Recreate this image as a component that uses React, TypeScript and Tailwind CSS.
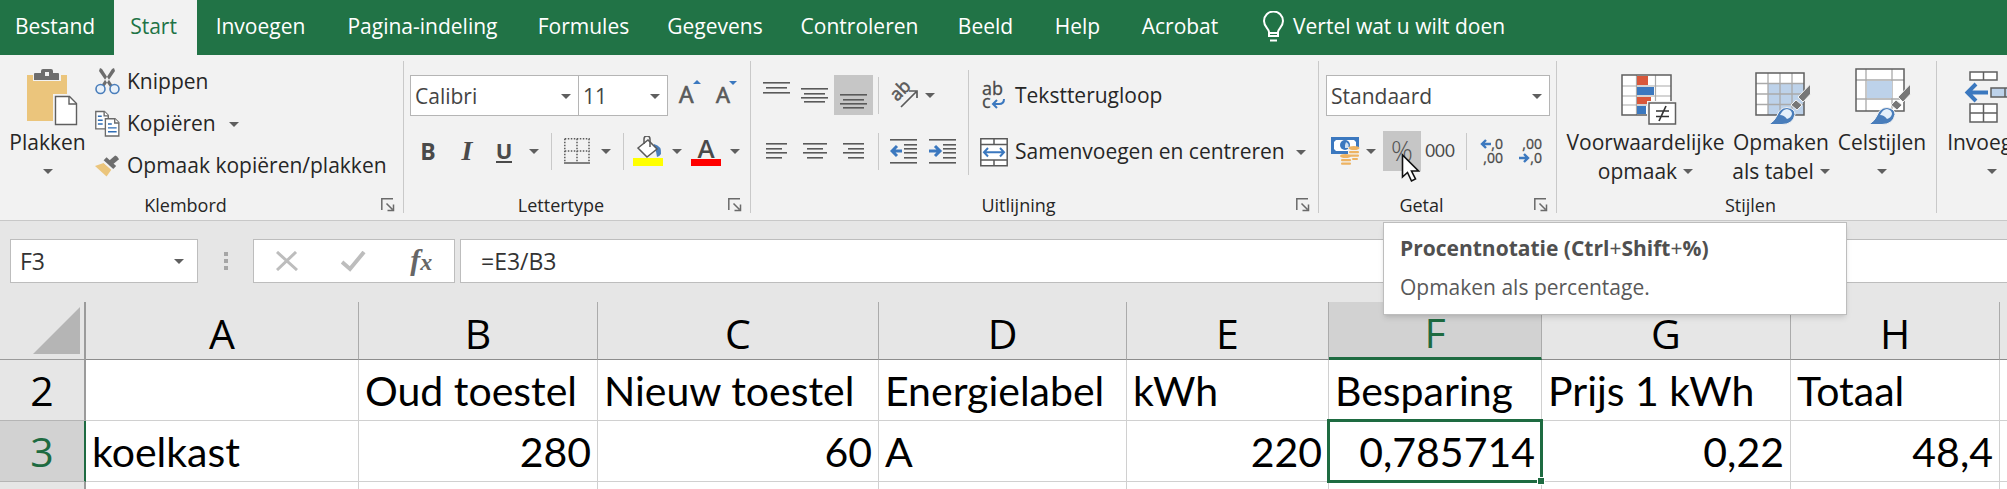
import type { ReactNode } from "react";
import clsx from "clsx";

const tabs = [
  { label: "Bestand", width: "w-[114px]" },
  { label: "Start", width: "w-[83px]", active: true },
  { label: "Invoegen", width: "w-[131px]" },
  { label: "Pagina-indeling", width: "w-[193px]" },
  { label: "Formules", width: "w-[129px]" },
  { label: "Gegevens", width: "w-[134px]" },
  { label: "Controleren", width: "w-[155px]" },
  { label: "Beeld", width: "w-[97px]" },
  { label: "Help", width: "w-[87px]" },
  { label: "Acrobat", width: "w-[118px]" },
];

const columns = [
  { name: "A", width: "w-[273px]" },
  { name: "B", width: "w-[239px]" },
  { name: "C", width: "w-[281px]" },
  { name: "D", width: "w-[248px]" },
  { name: "E", width: "w-[202px]" },
  { name: "F", width: "w-[213px]" },
  { name: "G", width: "w-[249px]" },
  { name: "H", width: "w-[209px]" },
];

const rows = [
  { nr: 2, cells: ["", "Oud toestel", "Nieuw toestel", "Energielabel", "kWh", "Besparing", "Prijs 1 kWh", "Totaal"] },
  { nr: 3, cells: ["koelkast", "280", "60", "A", "220", "0,785714", "0,22", "48,4"] },
  { nr: 4, cells: ["", "", "", "", "", "", "", ""] },
];

const selected = { col: "F", row: 3 };

const isNumber = (value: string) => /^[\d,]+$/.test(value);

const Caret = ({ className }: { className?: string }) => (
  <svg width="10" height="5" viewBox="0 0 10 5" className={clsx("shrink-0", className)}>
    <path d="M0 0h10L5 5z" fill="#5f5f5f" />
  </svg>
);

const Divider = ({ className }: { className?: string }) => (
  <div className={clsx("w-px shrink-0 bg-[#c9c9c9]", className)} />
);

// Horizontal text lines, given as [x, y, width]
const Lines = ({ lines, children }: { lines: number[][]; children?: ReactNode }) => (
  <svg width="28" height="28" viewBox="0 0 28 28" className="shrink-0">
    {lines.map(([x, y, w]) => (
      <rect key={y} x={x} y={y} width={w} height="1.6" fill="#5a5a5a" />
    ))}
    {children}
  </svg>
);

const BulbIcon = () => (
  <svg width="24" height="32" viewBox="0 0 24 32" fill="none" stroke="#fff" strokeWidth="2">
    <path d="M8 25v-4c0-3-5-5-5-11a9 9 0 0 1 19 0c0 6-5 8-5 11v4z" />
    <path d="M8 22h9M9 29.500h7" />
  </svg>
);

const PasteIcon = () => (
  <svg width="62" height="60" viewBox="-8 0 62 60">
    <rect x="2" y="7" width="40" height="46" fill="#ebc57c" />
    <path d="M8 5h28v8H8z" fill="#f2f2f2" />
    <path d="M9 12V6q0-1 1-1h6V3q0-2 2-2h8q2 0 2 2v2h5q1 0 1 1v6z" fill="#6d6d6d" />
    <rect x="20" y="4" width="4" height="4" fill="#f2f2f2" />
    <path d="M28 26h16l10 10v24H28z" fill="#f2f2f2" />
    <path d="M30.500 28.500h14l7 7v21h-21z" fill="#fff" stroke="#5f5f5f" strokeWidth="1.400" />
    <path d="M44 28.500v7.500h7.500" fill="none" stroke="#5f5f5f" strokeWidth="1.400" />
  </svg>
);

const CutIcon = () => (
  <svg width="25" height="28" viewBox="0 0 25 28">
    <path d="M5 0l2 1 11 17-3 1L4 3zM19 0l-2 1L6 18l3 1L20 3z" fill="#6d6d6d" />
    <circle cx="5.500" cy="21" r="4.500" fill="#e9f1f9" stroke="#4a7ebb" strokeWidth="1.600" />
    <circle cx="19.500" cy="21" r="4.500" fill="#e9f1f9" stroke="#4a7ebb" strokeWidth="1.600" />
  </svg>
);

const CopyIcon = () => (
  <svg width="25" height="28" viewBox="0 0 26 28">
    <g stroke="#6a6a6a" strokeWidth="1.400" fill="#fff">
      <path d="M.8 1h9l4 4v14H.8z" />
      <path d="M9.500 1v4.500H14" />
      <path d="M10.800 8.500h10l4 4v14h-14z" />
      <path d="M20.500 8.500V13H25" />
    </g>
    <path d="M3 6h4M3 10h5M3 14h5M13.500 14h4M13.500 18h9M13.500 22h9" stroke="#2f6db5" strokeWidth="1.500" />
  </svg>
);

const PainterIcon = () => (
  <svg width="25" height="24" viewBox="0 0 26 24">
    <path d="M0 12l9-3 8 7-5 7z" fill="#ebc57c" />
    <path d="M9 6l3-3 10 9-3 3z" fill="#6d6d6d" />
    <path d="M14 7l7-6 2 1 2 3-6 5z" fill="#6d6d6d" />
    <path d="M9 8l9 8" stroke="#f2f2f2" strokeWidth="1.200" />
  </svg>
);

const BordersIcon = () => (
  <svg width="26" height="26" viewBox="0 0 26 26" stroke="#5a5a5a" strokeWidth="1.500">
    <path d="M.8 .8h25M.8 13h25M.8 .8v23M13 .8v23M25 .8v23" strokeDasharray="1.500 1.500" fill="none" />
    <path d="M0 25h26" />
  </svg>
);

const FillIcon = () => (
  <svg width="30" height="30" viewBox="0 0 30 30">
    <rect y="22" width="30" height="8" fill="#ff0" />
    <path d="M21 8q8 2 7 10-2 3-4 3 0-5-3-9z" fill="#4a7ebb" />
    <path d="M5 12l10-8 9 9-10 8z" fill="#fff" stroke="#5a5a5a" strokeWidth="1.500" />
    <path d="M11 8V3q0-3 3-3t3 3v8" fill="none" stroke="#5a5a5a" strokeWidth="1.500" />
  </svg>
);

const OrientationIcon = () => (
  <svg width="30" height="28" viewBox="0 0 30 28" className="overflow-visible">
    <text x="0" y="0" transform="translate(8 21) rotate(-45)" fontSize="18" fill="#5a5a5a" stroke="#5a5a5a" strokeWidth=".6">
      ab
    </text>
    <path d="M12 26L27 11M20 10l8 0v7" fill="none" stroke="#5a5a5a" strokeWidth="1.700" />
  </svg>
);

const WrapIcon = () => (
  <svg width="24" height="28" viewBox="0 0 24 28" className="overflow-visible">
    <text x="0" y="13" fontSize="18" fill="#4a4a4a" stroke="#4a4a4a" strokeWidth=".3">ab</text>
    <text x="0" y="26" fontSize="18" fill="#4a4a4a" stroke="#4a4a4a" strokeWidth=".3">c</text>
    <path d="M22 17q0 5-5 5h-5M15 18l-4 4 4 4" fill="none" stroke="#3b78bf" strokeWidth="2" />
  </svg>
);

const MergeIcon = () => (
  <svg width="28" height="29" viewBox="0 0 28 29" fill="none">
    <path d="M.8 .8h26.400v27H.8zM.8 6.500h26.400M.8 22h26.400M14 .8v5.700M14 22v6" fill="#fff" stroke="#5a5a5a" strokeWidth="1.500" />
    <path d="M5 14.200h18M8 10l-4 4.200L8 18.500M20 10l4 4.200-4 4.300" stroke="#3b78bf" strokeWidth="2" />
  </svg>
);

const MoneyIcon = () => (
  <svg width="30" height="30" viewBox="0 0 30 30">
    <rect width="28" height="17" y="1" fill="#3b78bf" />
    <path d="M5 4h18l2 2v7l-2 2H5l-2-2V6z" fill="#fff" />
    <circle cx="14" cy="9" r="5" fill="#3b78bf" />
    <path d="M15 6q4 2 2 6h-3V9z" fill="#cfe0f2" />
    <path d="M17 11h12v13h-8v5H9V18h8z" fill="#f2f2f2" />
    <g fill="#edb362">
      <ellipse cx="23" cy="12" rx="5.500" ry="2" />
      <rect x="18" y="15" width="10" height="2.200" rx="1" />
      <rect x="18" y="18.500" width="10" height="2.200" rx="1" />
      <rect x="21" y="22" width="6" height="2" rx="1" />
      <ellipse cx="14.500" cy="20" rx="5.500" ry="2" />
      <rect x="10" y="23" width="10" height="2.200" rx="1" />
      <rect x="10" y="26.500" width="10" height="2.200" rx="1" />
    </g>
  </svg>
);

const DecimalIcon = ({ less }: { less?: boolean }) => (
  <svg width="26" height="28" viewBox="0 0 26 28" fill="#4a4a4a" className="overflow-visible">
    <g fontSize="14" stroke="#4a4a4a" strokeWidth=".3" textAnchor="end">
      <text x="24" y="12">{less ? ",00" : ",0"}</text>
      <text x="24" y="26">{less ? ",0" : ",00"}</text>
    </g>
    {less ? (
      <path d="M1 21h9M6 17l4 4-4 4" fill="none" stroke="#3b78bf" strokeWidth="2.400" />
    ) : (
      <path d="M12 7H3M7 3L3 7l4 4" fill="none" stroke="#3b78bf" strokeWidth="2.400" />
    )}
  </svg>
);

const Brush = () => (
  <g stroke="#f2f2f2">
    <path d="M55.500 14v10L48 32l-5-5z" fill="#777" />
    <path d="M41 30l6 5-5 5-6-5z" fill="#777" />
    <path d="M14 54.500q6-4 8-9 3-8 10-8 8 1 8 7-2 10-13 10z" fill="#4a7ebb" />
    <path d="M25 45q3-6 7-6 5 1 5 5-1 4-5 5-3-4-7-4z" fill="#e6f0fa" stroke="none" />
  </g>
);

const ConditionalIcon = () => (
  <svg width="62" height="56" viewBox="-6 0 62 56">
    <path d="M1 5h49v40H1z" fill="#fff" />
    <path d="M1 16h49M1 26h49M1 35h49M15.500 5v40M34.500 5v40" stroke="#aaa" strokeWidth="1.200" />
    <path d="M1 5h49v40H1z" fill="none" stroke="#5f5f5f" strokeWidth="1.500" />
    <path d="M16 6h11v9H16zM16 27h14v7H16z" fill="#d9583b" />
    <path d="M16 17h17v8H16zM16 36h9v8h-9z" fill="#3b78bf" />
    <path d="M26 31h30v25H26z" fill="#f2f2f2" />
    <path d="M28 33h26.500v21H28z" fill="#fff" stroke="#5f5f5f" strokeWidth="1.500" />
    <path d="M35 41h13M35 46.500h13M45 36l-7 15" stroke="#333" strokeWidth="1.700" />
  </svg>
);

const TableIcon = () => (
  <svg width="60" height="56" viewBox="-4 0 60 56">
    <path d="M1 3h48v42H1z" fill="#fff" />
    <path d="M13 14h36v31H13z" fill="#bdd2ea" />
    <path d="M1 13.500h48M1 24h48M1 34.500h48M13 3v42M25 3v42M37 3v42" stroke="#aaa" strokeWidth="1.300" />
    <path d="M1 3h48v42H1z" fill="none" stroke="#5f5f5f" strokeWidth="1.500" />
    <Brush />
  </svg>
);

const CellStyleIcon = () => (
  <svg width="58" height="60" viewBox="-2 0 58 60">
    <path d="M1 1h48v42H1z" fill="#fff" />
    <path d="M1 12h48M1 31h48M11 1v42M37 1v42" stroke="#aaa" strokeWidth="1.300" />
    <path d="M12 13h25v17H12z" fill="#bdd2ea" />
    <path d="M1 1h48v42H1z" fill="none" stroke="#5f5f5f" strokeWidth="1.500" />
    <g transform="translate(0 2)">
      <Brush />
    </g>
  </svg>
);

const InsertIcon = () => (
  <svg width="56" height="56" viewBox="0 0 56 56" fill="#fff" stroke="#5f5f5f" strokeWidth="1.500">
    <path d="M6 2h27v8H6zM19.500 2v8M6 34h27v18H6zM19.500 34v18M6 43h27" />
    <path d="M27 18h28v9H27zM41 18v9" fill="#bdd2ea" />
    <path d="M24 22.500H4M12 14l-8.500 8.500L12 31" fill="none" stroke="#3b78bf" strokeWidth="4" />
  </svg>
);

const LauncherIcon = () => (
  <svg width="14" height="14" viewBox="0 0 14 14" fill="none" stroke="#6a6a6a" strokeWidth="1.500">
    <path d="M.8 12V.8H12M5.500 5.500l6 6M12.500 6.500v6h-6" />
  </svg>
);

const Group = ({ label, launcher = true, className, children }: {
  label: string;
  launcher?: boolean;
  className?: string;
  children: ReactNode;
}) => (
  <section aria-label={label} className={clsx("flex h-[165px] shrink-0 flex-col", className)}>
    <div className="flex flex-1">{children}</div>
    <div className={clsx("flex h-[30px] items-center gap-[10px]", launcher ? "pr-2" : "pl-2")}>
      <span className="flex-1 text-center text-[18px] leading-6 text-[#262626]">{label}</span>
      {launcher && (
        <button aria-label={`${label} instellingen`}>
          <LauncherIcon />
        </button>
      )}
    </div>
  </section>
);

const GroupDivider = () => <Divider className="mt-[6px] h-[152px]" />;

const IconButton = ({ label, width, active, children }: {
  label: string;
  width: string;
  active?: boolean;
  children: ReactNode;
}) => (
  <button
    aria-label={label}
    className={clsx("flex h-10 shrink-0 items-center justify-center", width, active && "bg-[#c6c6c6]")}
  >
    {children}
  </button>
);

const Select = ({ label, value, className }: { label: string; value: string; className: string }) => (
  <div className={clsx("relative h-[41px] shrink-0 border border-[#b5b5b5] bg-white", className)}>
    <select aria-label={label} className="h-full w-full appearance-none bg-transparent pt-0.5 pl-1 text-[21px] text-[#444] outline-none">
      <option>{value}</option>
    </select>
    <Caret className="pointer-events-none absolute top-[18px] right-[7px]" />
  </div>
);

const BigButton = ({ icon, width, children }: { icon: ReactNode; width: string; children: ReactNode }) => (
  <button className={clsx("flex shrink-0 flex-col items-center pt-3 text-[21px] leading-[29px]", width)}>
    <span className="flex h-[61px] items-center">{icon}</span>
    {children}
  </button>
);

const Ribbon = () => (
  <div className="flex border-b border-[#c8c8c8] bg-[#f2f2f2] text-[#262626]">
    <Group label="Klembord" className="w-[403px]">
      <BigButton icon={<PasteIcon />} width="w-[95px]">
        <span>Plakken</span>
        <Caret className="mt-3" />
      </BigButton>
      <div className="flex flex-col pt-[6px] text-[21px]">
        <button className="flex h-[42px] items-center gap-[7px]">
          <CutIcon />
          Knippen
        </button>
        <button className="flex h-[42px] items-center gap-[7px]">
          <CopyIcon />
          Kopiëren
          <Caret className="ml-[6px]" />
        </button>
        <button className="flex h-[42px] items-center gap-[7px]">
          <PainterIcon />
          Opmaak kopiëren/plakken
        </button>
      </div>
    </Group>
    <GroupDivider />

    <Group label="Lettertype" className="w-[346px]">
      <div className="flex flex-col gap-4 pt-5 pl-[6px]">
        <div className="flex h-10">
          <Select label="Lettertype" value="Calibri" className="w-[169px]" />
          <Select label="Tekengrootte" value="11" className="w-[89px] border-l-0" />
          <IconButton label="Lettertype vergroten" width="w-[40px]">
            <svg width="24" height="28" viewBox="0 0 24 28" className="overflow-visible">
              <text x="3" y="22" fontSize="23" fill="#5a5a5a" stroke="#5a5a5a" strokeWidth=".7">A</text>
              <path d="M17 3l4-4 4 4z" fill="#3b78bf" />
            </svg>
          </IconButton>
          <IconButton label="Lettertype verkleinen" width="w-[34px]">
            <svg width="24" height="28" viewBox="0 0 24 28" className="overflow-visible">
              <text x="3" y="22" fontSize="22" fill="#5a5a5a" stroke="#5a5a5a" strokeWidth=".7">A</text>
              <path d="M16 0h8l-4 4z" fill="#3b78bf" />
            </svg>
          </IconButton>
        </div>
        <div className="flex h-10 items-center text-[#4a4a4a]">
          <IconButton label="Vet" width="w-[36px]"><b className="text-[23px]">B</b></IconButton>
          <IconButton label="Cursief" width="w-[42px]">
            <i className="font-['Liberation_Serif',serif] text-[28px] font-bold">I</i>
          </IconButton>
          <IconButton label="Onderstrepen" width="w-[32px]">
            <span className="border-b-2 border-[#4a4a4a] text-[22px] leading-[22px] font-bold">U</span>
          </IconButton>
          <IconButton label="Onderstreping kiezen" width="w-[28px]"><Caret /></IconButton>
          <Divider className="ml-[3px] h-[37px]" />
          <IconButton label="Randen" width="w-[49px]"><BordersIcon /></IconButton>
          <Caret />
          <Divider className="ml-3 h-[37px]" />
          <IconButton label="Opvulkleur" width="w-[48px]"><FillIcon /></IconButton>
          <Caret />
          <IconButton label="Tekstkleur" width="w-[48px]">
            <span className="flex w-[30px] flex-col items-center border-b-[7px] border-[#f00] text-[26px] leading-[22px] font-semibold">
              A
            </span>
          </IconButton>
          <Caret />
        </div>
      </div>
    </Group>
    <GroupDivider />

    <Group label="Uitlijning" className="w-[567px]">
      <div className="flex flex-col gap-4 pt-5 pl-[6px]">
        <div className="flex h-10 items-center">
          <IconButton label="Boven uitlijnen" width="w-[39px]">
            <Lines lines={[[0, 1, 27], [3, 6, 21], [0, 11, 27]]} />
          </IconButton>
          <IconButton label="Centreren" width="w-[38px]">
            <Lines lines={[[0, 7, 27], [3, 12, 21], [0, 16, 27], [3, 20, 21]]} />
          </IconButton>
          <IconButton label="Onder uitlijnen" width="w-[39px]" active>
            <Lines lines={[[0, 13, 27], [3, 18, 21], [0, 22, 27], [3, 26, 21]]} />
          </IconButton>
          <Divider className="ml-[5px] h-[37px]" />
          <IconButton label="Afdrukstand" width="w-[50px]"><OrientationIcon /></IconButton>
          <Caret className="-ml-1" />
        </div>
        <div className="flex h-10 items-center">
          <IconButton label="Links uitlijnen" width="w-[39px]">
            <Lines lines={[[3, 6, 21], [3, 11, 16], [3, 15, 21], [3, 20, 16]]} />
          </IconButton>
          <IconButton label="Horizontaal centreren" width="w-[38px]">
            <Lines lines={[[2, 6, 24], [6, 11, 16], [2, 15, 24], [6, 20, 16]]} />
          </IconButton>
          <IconButton label="Rechts uitlijnen" width="w-[39px]">
            <Lines lines={[[3, 6, 21], [8, 11, 16], [3, 15, 21], [8, 20, 16]]} />
          </IconButton>
          <Divider className="ml-[5px] h-[37px]" />
          <IconButton label="Inspringing verkleinen" width="w-[50px]">
            <Lines lines={[[0, 2, 27], [14, 7, 13], [14, 11, 13], [14, 15, 13], [14, 20, 13], [0, 25, 27]]}>
              <path d="M12 14H2M7 9l-5 5 5 5" fill="none" stroke="#3b78bf" strokeWidth="3" />
            </Lines>
          </IconButton>
          <IconButton label="Inspringing vergroten" width="w-[28px]">
            <Lines lines={[[0, 2, 27], [14, 7, 13], [14, 11, 13], [14, 15, 13], [14, 20, 13], [0, 25, 27]]}>
              <path d="M0 14h10M6 9l5 5-5 5" fill="none" stroke="#3b78bf" strokeWidth="3" />
            </Lines>
          </IconButton>
        </div>
      </div>
      <Divider className="mt-[15px] ml-[11px] h-[105px]" />
      <div className="flex flex-col gap-4 pt-[21px] pl-[11px] text-[21px]">
        <button className="flex h-10 items-center gap-[7px]">
          <span className="flex w-7 justify-center"><WrapIcon /></span>
          Tekstterugloop
        </button>
        <button className="flex h-10 items-center gap-[7px]">
          <MergeIcon />
          Samenvoegen en centreren
          <Caret className="ml-1" />
        </button>
      </div>
    </Group>
    <GroupDivider />

    <Group label="Getal" className="w-[237px]">
      <div className="flex flex-col gap-4 pt-5 pl-[7px]">
        <div className="flex h-10">
          <Select label="Getalnotatie" value="Standaard" className="w-[224px]" />
        </div>
        <div className="flex h-10 items-center">
          <IconButton label="Financiële notatie" width="w-[40px]"><MoneyIcon /></IconButton>
          <Caret />
          <div className="relative ml-[7px]">
            <IconButton label="Procentnotatie" width="w-[38px]" active>
              <span className="text-[27px] font-light text-[#555]">%</span>
            </IconButton>
            {/* Mouse pointer */}
            <svg width="20" height="30" viewBox="0 0 20 30" className="absolute top-[22px] left-[18px]">
              <path d="M1.500 2v22l5-4.500L10.500 28l4-2-4-8h7z" fill="#fff" stroke="#111" strokeWidth="1.600" />
            </svg>
            <div
              role="tooltip"
              className="absolute top-[91px] left-0 z-10 flex h-[93px] w-[464px] flex-col gap-[11px] border border-[#bdbdbd] bg-white pt-[11px] pl-4 text-[21px] leading-7 text-[#595959] shadow-md"
            >
              <p className="font-bold whitespace-nowrap text-[#505050]">
                Procentnotatie (Ctrl<span className="font-normal">+</span>Shift<span className="font-normal">+</span>%)
              </p>
              <p>Opmaken als percentage.</p>
            </div>
          </div>
          <IconButton label="Duizendtalnotatie" width="w-[38px]">
            <span className="font-['Lato',sans-serif] text-[17px] text-[#4a4a4a]">000</span>
          </IconButton>
          <Divider className="ml-[7px] h-[37px]" />
          <IconButton label="Meer decimalen" width="w-[50px]"><DecimalIcon /></IconButton>
          <IconButton label="Minder decimalen" width="w-[28px]"><DecimalIcon less /></IconButton>
        </div>
      </div>
    </Group>
    <GroupDivider />

    <Group label="Stijlen" launcher={false} className="w-[379px]">
      <BigButton icon={<ConditionalIcon />} width="w-[177px]">
        <span>Voorwaardelijke</span>
        <span className="flex items-center gap-[6px]">opmaak <Caret /></span>
      </BigButton>
      <BigButton icon={<TableIcon />} width="w-[94px]">
        <span>Opmaken</span>
        <span className="flex items-center gap-[6px]">als tabel <Caret /></span>
      </BigButton>
      <BigButton icon={<CellStyleIcon />} width="w-[108px]">
        <span>Celstijlen</span>
        <Caret className="mt-3" />
      </BigButton>
    </Group>
    <GroupDivider />

    <div className="flex min-w-0 flex-1 overflow-hidden">
      <BigButton icon={<InsertIcon />} width="w-[110px]">
        <span>Invoegen</span>
        <Caret className="mt-3" />
      </BigButton>
    </div>
  </div>
);

const FormulaBar = () => (
  <div className="flex pt-[18px] pb-[19px] pl-[10px] text-[23px] text-[#333]">
    <div className="relative h-11 w-[188px] shrink-0 border border-[#bdbdbd] bg-white">
      <input aria-label="Naamvak" defaultValue="F3" className="h-full w-full bg-transparent pl-[9px] outline-none" />
      <Caret className="pointer-events-none absolute top-[19px] right-[13px]" />
    </div>
    <div className="flex w-[55px] shrink-0 flex-col items-center justify-center gap-[3px]">
      <span className="size-1 bg-[#a6a6a6]" />
      <span className="size-1 bg-[#a6a6a6]" />
      <span className="size-1 bg-[#a6a6a6]" />
    </div>
    <div className="flex h-11 w-[202px] shrink-0 items-center justify-around border border-[#bdbdbd] bg-white">
      <button aria-label="Annuleren">
        <svg width="22" height="20" viewBox="0 0 22 20" fill="none" stroke="#bdbdbd" strokeWidth="3">
          <path d="M1 1l20 18M20 1L1 19" />
        </svg>
      </button>
      <button aria-label="Invoeren">
        <svg width="25" height="21" viewBox="0 0 25 21" fill="none" stroke="#bdbdbd" strokeWidth="4">
          <path d="M1 11l8 7L23 1" />
        </svg>
      </button>
      <button aria-label="Functie invoegen" className="font-['Liberation_Serif',serif] text-[30px] leading-9 text-[#666] italic">
        <b className="font-bold">f</b>
        <span className="text-[24px] font-bold">x</span>
      </button>
    </div>
    <input
      aria-label="Formulebalk"
      defaultValue="=E3/B3"
      className="ml-[5px] h-11 min-w-0 flex-1 border border-r-0 border-[#bdbdbd] bg-white pl-5 outline-none"
    />
  </div>
);

const Sheet = () => (
  <table className="w-full table-fixed border-separate border-spacing-0">
    <colgroup>
      <col className="w-[86px]" />
      {columns.map((col) => (
        <col key={col.name} className={col.width} />
      ))}
      <col />
    </colgroup>
    <thead>
      <tr className="h-[58px] text-[41px] leading-[50px]">
        <th aria-label="Alles selecteren" className="border-r-2 border-b border-[#9b9b9b] p-0">
          <svg width="47" height="47" viewBox="0 0 47 47" className="mr-1 ml-auto block">
            <path d="M47 0v47H0z" fill="#b5b5b5" />
          </svg>
        </th>
        {columns.map((col) => (
          <th
            key={col.name}
            scope="col"
            className={clsx(
              "border-r border-r-[#ababab] p-0 pt-1 font-normal",
              col.name === selected.col
                ? "border-b-[3px] border-b-[#1e6b41] bg-[#d2d2d2] text-[#1e6b41]"
                : "border-b border-b-[#8c8c8c] text-black"
            )}
          >
            {col.name}
          </th>
        ))}
        <th className="border-b border-b-[#8c8c8c] p-0" />
      </tr>
    </thead>
    <tbody>
      {rows.map((row) => (
        <tr key={row.nr} className="h-[61px] text-[41px] leading-[50px] text-black">
          <th
            scope="row"
            className={clsx(
              "border-r-2 border-b border-b-[#b5b5b5] p-0 font-normal",
              row.nr === selected.row
                ? "border-r-[#1e6b41] bg-[#d2d2d2] text-[#1e6b41]"
                : "border-r-[#9b9b9b]"
            )}
          >
            {row.nr}
          </th>
          {row.cells.map((value, i) => {
            const active = row.nr === selected.row && columns[i].name === selected.col;
            return (
              <td
                key={i}
                className={clsx(
                  "border-r border-b border-[#d0d0d0] px-[6px] pt-0.5 pb-0 font-['Lato',sans-serif] whitespace-nowrap",
                  isNumber(value) && "text-right",
                  active ? "relative z-1 bg-white" : "bg-white"
                )}
              >
                {value}
                {active && (
                  <span className="absolute -inset-[2px] border-[3px] border-[#1e6b41]">
                    <span className="absolute -right-[5px] -bottom-[5px] size-2 border border-white bg-[#1e6b41]" />
                  </span>
                )}
              </td>
            );
          })}
          <td className="border-b border-[#d0d0d0] bg-white p-0" />
        </tr>
      ))}
    </tbody>
  </table>
);

const App = () => {
  return (
    <div className="h-screen w-full overflow-hidden bg-[#e6e6e6] font-['Open_Sans',sans-serif] whitespace-nowrap">
      <nav className="flex h-[55px] bg-[#217346] text-[21px] text-white">
        {tabs.map((tab) => (
          <button
            key={tab.label}
            className={clsx(
              "flex shrink-0 items-center justify-center pr-1 pb-0.5",
              tab.width,
              tab.active && "bg-[#f2f2f2] text-[#217346]"
            )}
          >
            {tab.label}
          </button>
        ))}
        <button className="ml-5 flex items-center gap-2 pb-0.5">
          <BulbIcon />
          Vertel wat u wilt doen
        </button>
      </nav>
      <Ribbon />
      <FormulaBar />
      <Sheet />
    </div>
  );
};

export default App;
